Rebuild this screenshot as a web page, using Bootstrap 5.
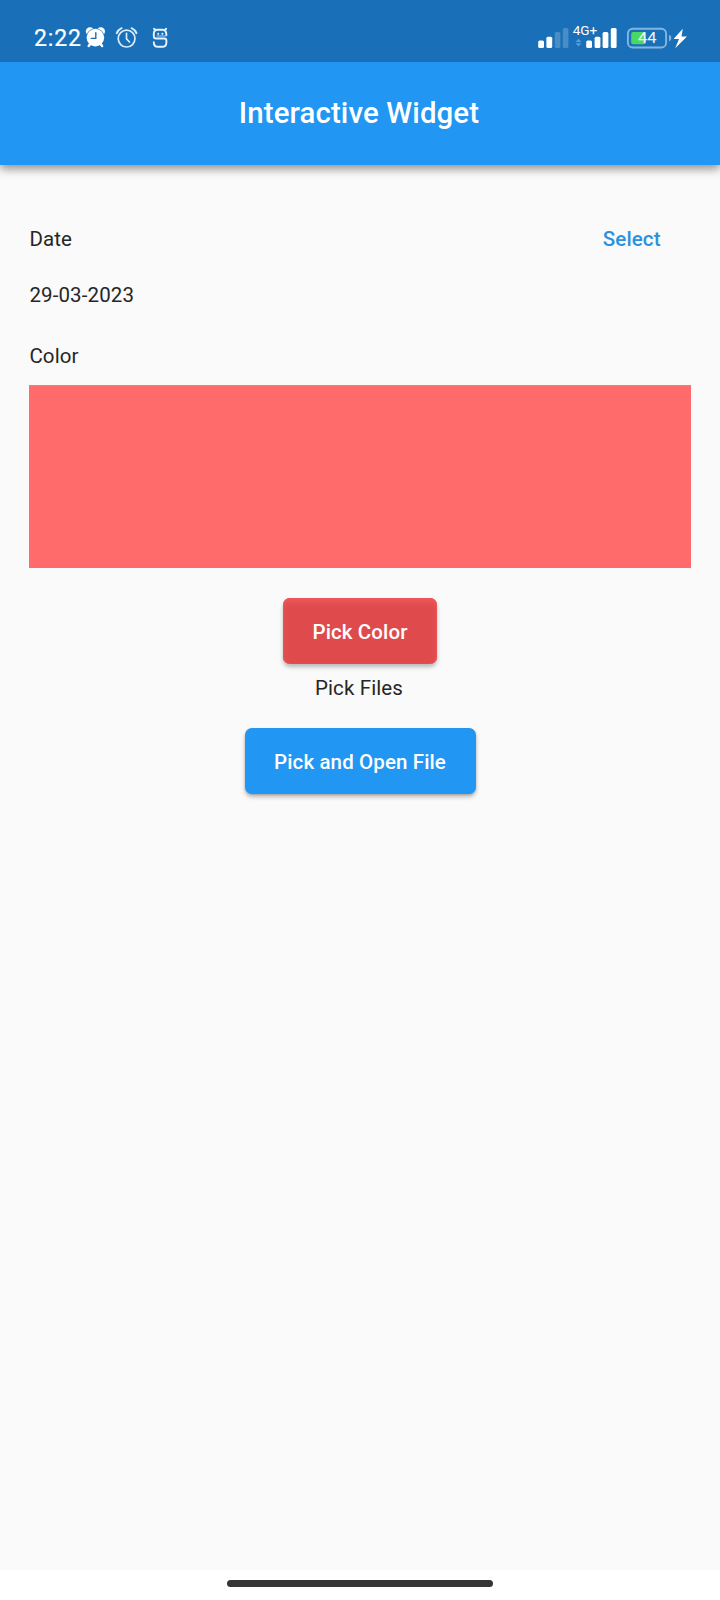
<!DOCTYPE html>
<html lang="en">
<head>
<meta charset="utf-8">
<meta name="viewport" content="width=device-width, initial-scale=1">
<title>Interactive Widget</title>
<link href="https://cdn.jsdelivr.net/npm/bootstrap@5.3.0/dist/css/bootstrap.min.css" rel="stylesheet">
<style>
body{font-family:Roboto,sans-serif;font-size:20.5px;line-height:24px;letter-spacing:.12px;color:#262626;background:#fafafa}
.status-bar{height:62px;z-index:1;background:#1a70b8;padding:22px 30px 0 34px}
.status-bar svg{display:block;flex:none}
.clock{font-size:23px;letter-spacing:.9px;line-height:33px;width:51px;-webkit-text-stroke:.2px #fff}
.app-bar{height:102.5px;background:#2196f3;box-shadow:0 4px 9px rgba(0,0,0,.42)}
.app-title{font-size:29.4px;font-weight:500;line-height:34px;letter-spacing:.12px;padding-right:2px}
.content{padding:62.5px 29.4px 0}
.btn{--bs-btn-padding-y:0;--bs-btn-border-width:0;--bs-btn-font-size:20.5px;--bs-btn-line-height:24px;--bs-btn-font-weight:500;letter-spacing:.12px}
.select-btn{--bs-btn-padding-x:30px;--bs-btn-color:#2b91df}
.date-value{margin-top:32px}
.color-label{margin-top:37px}
.swatch{height:183px;margin-top:17px;background:#ff6b6b;border-top:1px solid #e78080}
.raised{--bs-btn-padding-x:0;--bs-btn-border-radius:7px;--bs-btn-color:#fff;height:66px;padding-top:2px;box-shadow:0 3px 4px rgba(0,0,0,.26),0 1px 2px rgba(0,0,0,.14)}
.pick-color{width:154px;margin-top:29.5px;background:#df4b4d;box-shadow:0 3px 4px rgba(0,0,0,.26),inset 0 5px 6px -1px #ee585b,inset 0 0 3px #ec5558}
.files-label{margin-top:12px;padding-right:2px}
.pick-file{width:231px;margin-top:28px;background:#2196f3}
.nav-strip{height:30px;background:#fff;padding-top:10px}
.home-pill{width:266px;height:7px;background:#353535}
</style>
</head>
<body>
<div class="d-flex flex-column min-vh-100">
  <div class="status-bar position-relative d-flex justify-content-between text-white">
    <div class="d-flex">
      <span class="clock text-nowrap">2:22</span>
      <svg width="88" height="30" viewBox="85 22 88 30" fill="none" stroke="#fff" stroke-linecap="round" stroke-linejoin="round">
        <!-- solid alarm clock -->
        <circle cx="90" cy="31.5" r="4.2" fill="#fff" stroke="none"/>
        <circle cx="100.8" cy="31.5" r="4.2" fill="#fff" stroke="none"/>
        <circle cx="95.4" cy="37.6" r="9.3" fill="#1a70b8" stroke="none"/>
        <circle cx="95.4" cy="37.6" r="8.8" fill="#fff" stroke="none"/>
        <path d="M90 44.2l-1.3 1.8M100.8 44.2l1.3 1.8" stroke-width="2.4"/>
        <path d="M95.8 32.8v5.6h-4.6" stroke="#1a70b8" stroke-width="1.4"/>
        <!-- outlined alarm clock -->
        <g stroke="#d9ecfb" stroke-width="1.7">
          <circle cx="126.6" cy="38.6" r="8.4"/>
          <path d="M126.5 33.3v5.5l3 3.2"/>
          <path d="M116.8 33.2q1.4-3.4 4.8-5M136.4 33.2q-1.4-3.4-4.8-5" stroke-width="2"/>
        </g>
        <!-- S-shaped assistant mark -->
        <g stroke="#e8f4ff" stroke-width="1.9">
          <path d="M154 28.8l1.2 1M166.2 28.8l-1.2 1M166.4 35q0-5.2-4-5.2h-4.6q-4 0-4 4v2.4q0 2.3 2.3 2.3h8q2.3 0 2.3 2.2v1.8q0 4.3-4.2 4.3h-4.2q-4.2 0-4.2-4.6"/>
          <path d="M158.2 33.7v.2M162.4 33.7v.2"/>
          <path d="M157 36h9.2" stroke-width=".7"/>
        </g>
      </svg>
    </div>
    <svg width="153" height="30" viewBox="537 22 153 30" font-family="Roboto, sans-serif" letter-spacing="0">
      <g fill="#fff">
        <rect x="538.2" y="40.6" width="5.8" height="7.4" rx="1.5"/>
        <rect x="546.4" y="36.8" width="5.8" height="11.2" rx="1.5"/>
        <g opacity=".2"><rect x="554.8" y="32" width="5.6" height="16" rx="1.5"/><rect x="562.8" y="28" width="5.6" height="20" rx="1.5"/></g>
        <rect x="586.2" y="40.6" width="5.8" height="7.4" rx="1.5"/>
        <rect x="594.6" y="36.8" width="5.8" height="11.2" rx="1.5"/>
        <rect x="602.6" y="32" width="5.8" height="16" rx="1.5"/>
        <rect x="610.8" y="28" width="5.8" height="20" rx="1.5"/>
        <text x="572.7" y="35.2" font-size="12.8" font-weight="400" textLength="24.6" lengthAdjust="spacingAndGlyphs">4G+</text>
        <path d="M578.5 38.8l3 3.2h-6zM578.5 46.5l3-3.2h-6z" opacity=".3"/>
      </g>
      <rect x="627.9" y="28.7" width="38.2" height="18.8" rx="4.8" fill="none" stroke="#83b6df" stroke-width="1.9"/>
      <rect x="631.2" y="32" width="14.6" height="12.2" rx="2" fill="#4bd763"/>
      <path d="M669 34.8q2.3.5 2.3 3.3t-2.3 3.3z" fill="#83b6df"/>
      <text x="638" y="42.9" font-size="14" font-weight="400" fill="#e9f6ff" textLength="18.5" lengthAdjust="spacingAndGlyphs">44</text>
      <path d="M682.8 28.8L673.6 39h5.4l-3.8 9.2L687 36.6h-5.5z" fill="#fff"/>
    </svg>
  </div>
  <header class="app-bar d-flex align-items-center justify-content-center text-white">
    <h1 class="app-title m-0">Interactive Widget</h1>
  </header>
  <main class="content flex-grow-1 d-flex flex-column">
    <div class="d-flex justify-content-between">
      <span>Date</span>
      <button class="btn select-btn" type="button">Select</button>
    </div>
    <div class="date-value">29-03-2023</div>
    <div class="color-label">Color</div>
    <div class="swatch"></div>
    <button class="btn raised pick-color align-self-center" type="button">Pick Color</button>
    <div class="files-label text-center">Pick Files</div>
    <button class="btn raised pick-file align-self-center" type="button">Pick and Open File</button>
  </main>
  <footer class="nav-strip d-flex justify-content-center">
    <div class="home-pill rounded-pill"></div>
  </footer>
</div>
</body>
</html>
